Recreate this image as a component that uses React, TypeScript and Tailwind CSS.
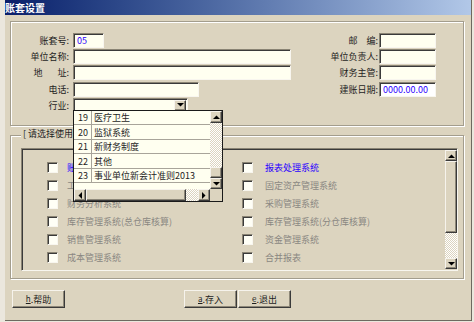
import React from 'react'

// sunken edit box, win9x style
function Sunken({ className = '', children }: { className?: string; children?: React.ReactNode }) {
  return (
    <div
      className={`h-[15px] border border-t-[#8a8474] border-l-[#8a8474] border-b-[#f8f6ef] border-r-[#f8f6ef] shadow-[inset_1px_1px_0_#3a3a3a] flex items-center pl-[3px] ${className}`}
    >
      {children}
    </div>
  )
}

const raised =
  'bg-[#dcd4bf] border border-t-[#f6f3ec] border-l-[#f6f3ec] border-b-[#3a3a3a] border-r-[#3a3a3a] shadow-[inset_-1px_-1px_0_#8d8778]'

const dither = 'bg-[repeating-conic-gradient(#ffffff_0_25%,#dcd4bf_0_50%)] bg-[length:2px_2px]'

function Arrow({ dir }: { dir: 'up' | 'down' | 'left' | 'right' }) {
  const pts = {
    up: '0,4 7,4 3.5,0.5',
    down: '0,0 7,0 3.5,3.5',
    left: '4,0 4,7 0.5,3.5',
    right: '0,0 0,7 3.5,3.5',
  }[dir]
  const vertical = dir === 'up' || dir === 'down'
  return (
    <svg width={vertical ? 7 : 4} height={vertical ? 4 : 7} viewBox={vertical ? '0 0 7 4' : '0 0 4 7'}>
      <polygon points={pts} fill="#000" />
    </svg>
  )
}

function Row({ label, children, className = '' }: { label: React.ReactNode; children: React.ReactNode; className?: string }) {
  return (
    <div className={`flex items-center h-[16px] ${className}`}>
      <div className="w-[58px] text-right leading-none whitespace-nowrap">{label}</div>
      <div className="ml-[4px]">{children}</div>
    </div>
  )
}

function RRow({ label, children, className = '' }: { label: React.ReactNode; children: React.ReactNode; className?: string }) {
  return (
    <div className={`flex items-center h-[16px] ${className}`}>
      <div className="w-[59px] text-right leading-none whitespace-nowrap">{label}</div>
      <div className="ml-[1px]">{children}</div>
    </div>
  )
}

function Check({ label, blue, right }: { label: string; blue?: boolean; right?: boolean }) {
  return (
    <div className="flex items-center h-[18px]">
      <div className="w-[11px] h-[11px] bg-[#fffff6] border border-t-[#8a8474] border-l-[#8a8474] border-b-[#f8f6ef] border-r-[#f8f6ef] shadow-[inset_1px_1px_0_#3a3a3a]" />
      <span
        className={`${right ? 'ml-[12px]' : 'ml-[9px]'} leading-none whitespace-nowrap ${blue ? 'text-[#2a00ff]' : 'text-[#8a8782]'}`}
      >
        {label}
      </span>
    </div>
  )
}

const industries = [
  { no: '19', name: '医疗卫生', h: 'h-[14px]' },
  { no: '20', name: '监狱系统', h: 'h-[15px]' },
  { no: '21', name: '新财务制度', h: 'h-[14px]' },
  { no: '22', name: '其他', h: 'h-[15px]' },
  { no: '23', name: '事业单位新会计准则2013', h: 'h-[14px]' },
]

const leftSystems = ['账务处理系统', '工资管理系统', '财务分析系统', '库存管理系统(总仓库核算)', '销售管理系统', '成本管理系统']
const rightSystems = ['报表处理系统', '固定资产管理系统', '采购管理系统', '库存管理系统(分仓库核算)', '资金管理系统', '合并报表']

export default function App() {
  return (
    <div className="w-[474px] h-[322px] relative overflow-hidden bg-[#ebe7dd] flex font-['Noto_Sans_CJK_SC','Noto_Sans',sans-serif] text-[9px] text-[#1e1e1e]">
      <div className="w-[5px]" />
      <div className="w-[467px] h-[321px] bg-[#dcd4bf] border-r border-b border-[#6e6a60] flex flex-col">
        {/* title bar */}
        <div className="h-[15px] bg-linear-to-r from-[#0a1e6a] to-[#b2c8e8] flex items-center">
          <span className="text-white font-bold text-[10px] leading-none">账套设置</span>
        </div>

        {/* basic info */}
        <div className="ml-[5px] mt-[6px] w-[454px] h-[105px] border border-[#a39d8d] shadow-[inset_1px_1px_0_#fff,1px_1px_0_#fff] flex">
          <div className="w-[280px] pt-[10px] flex flex-col">
            <Row label="账套号:">
              <Sunken className="w-[31px] bg-[#fffff0]">
                <span className="text-[#2a00ff] leading-none">05</span>
              </Sunken>
            </Row>
            <Row label="单位名称:">
              <Sunken className="w-[218px] bg-[#fffff0]" />
            </Row>
            <Row label={<>地<span className="ml-[15px]">址:</span></>}>
              <Sunken className="w-[218px] bg-[#fffff0]" />
            </Row>
            <Row label="电话:" className="mt-[1px]">
              <Sunken className="w-[126px] bg-[#fffff0]" />
            </Row>
            <Row label="行业:">
              <Sunken className="w-[115px] bg-[#fffff0] justify-end !pl-0 pr-[1px]">
                <div className={`w-[12px] h-[11px] flex items-center justify-center ${raised}`}>
                  <Arrow dir="down" />
                </div>
              </Sunken>
            </Row>
          </div>
          <div className="ml-[28px] pt-[10px] flex flex-col">
            <RRow label={<>邮<span className="ml-[9px]">编:</span></>}>
              <Sunken className="w-[57px] bg-[#fffff0]" />
            </RRow>
            <RRow label="单位负责人:">
              <Sunken className="w-[57px] bg-[#fffff0]" />
            </RRow>
            <RRow label="财务主管:">
              <Sunken className="w-[57px] bg-[#fffff0]" />
            </RRow>
            <RRow label="建账日期:" className="mt-[1px]">
              <Sunken className="w-[57px] bg-white">
                <span className="text-[#2a00ff] leading-none">0000.00.00</span>
              </Sunken>
            </RRow>
          </div>
        </div>

        {/* system selection */}
        <div className="ml-[5px] mt-[9px] w-[454px] h-[144px] border border-[#a39d8d] shadow-[inset_1px_1px_0_#fff,1px_1px_0_#fff] relative">
          <div className="absolute left-[10px] top-[-7px] bg-[#dcd4bf] px-[2px] leading-none text-[9px] whitespace-nowrap">
            [ 请选择使用的系统 ]
          </div>
          <div className="ml-[10px] mt-[12px] w-[437px] h-[123px] border border-t-[#8a8474] border-l-[#8a8474] border-b-[#f8f6ef] border-r-[#f8f6ef] shadow-[inset_1px_1px_0_#3a3a3a] flex">
            <div className="flex-1 pl-[25px] pt-[9px] flex">
              <div className="w-[195px] flex flex-col">
                {leftSystems.map((s, i) => (
                  <Check key={s} label={s} blue={i === 0} />
                ))}
              </div>
              <div className="flex flex-col">
                {rightSystems.map((s, i) => (
                  <Check key={s} label={s} blue={i === 0} right />
                ))}
              </div>
            </div>
            <div className="w-[12px] mt-[1px] h-[119px] flex flex-col">
              <div className={`h-[11px] flex items-center justify-center ${raised}`}>
                <Arrow dir="up" />
              </div>
              <div className={`h-[72px] ${raised}`} />
              <div className={`h-[25px] ${dither}`} />
              <div className={`h-[11px] flex items-center justify-center ${raised}`}>
                <Arrow dir="down" />
              </div>
            </div>
          </div>
        </div>

        {/* buttons */}
        <div className="mt-[11px] flex">
          <button className={`ml-[7px] w-[53px] h-[18px] flex items-center justify-center leading-none ${raised}`}>
            <span className="underline text-[8px]">h</span>.帮助
          </button>
          <button className={`ml-[119px] w-[53px] h-[18px] flex items-center justify-center leading-none ${raised}`}>
            <span className="underline text-[8px]">a</span>.存入
          </button>
          <button className={`ml-[1px] w-[53px] h-[18px] flex items-center justify-center leading-none ${raised}`}>
            <span className="underline text-[8px]">e</span>.退出
          </button>
        </div>
      </div>

      {/* industry dropdown list */}
      <div className="absolute left-[73px] top-[110px] w-[150px] h-[92px] border border-[#1a1a1a] bg-[#fffff0] flex flex-col">
        <div className="flex h-[78px]">
          <div className="flex-1 flex flex-col">
            {industries.map((it) => (
              <div key={it.no} className={`${it.h} flex border-b border-[#a8a49a]`}>
                <div className="w-[18px] pl-[4px] border-r border-[#a8a49a] flex items-center leading-none">{it.no}</div>
                <div className="pl-[2px] flex items-center leading-none whitespace-nowrap">{it.name}</div>
              </div>
            ))}
          </div>
          <div className="w-[12px] flex flex-col">
            <div className={`h-[12px] flex items-center justify-center ${raised}`}>
              <Arrow dir="up" />
            </div>
            <div className={`h-[44px] ${dither}`} />
            <div className={`h-[11px] ${raised}`} />
            <div className={`h-[11px] flex items-center justify-center ${raised}`}>
              <Arrow dir="down" />
            </div>
          </div>
        </div>
        <div className="flex h-[12px]">
          <div className={`w-[12px] flex items-center justify-center ${raised}`}>
            <Arrow dir="left" />
          </div>
          <div className={`w-[100px] ${raised}`} />
          <div className={`w-[12px] ${dither}`} />
          <div className={`w-[12px] flex items-center justify-center ${raised}`}>
            <Arrow dir="right" />
          </div>
          <div className="flex-1 bg-[#dcd4bf]" />
        </div>
      </div>
    </div>
  )
}
